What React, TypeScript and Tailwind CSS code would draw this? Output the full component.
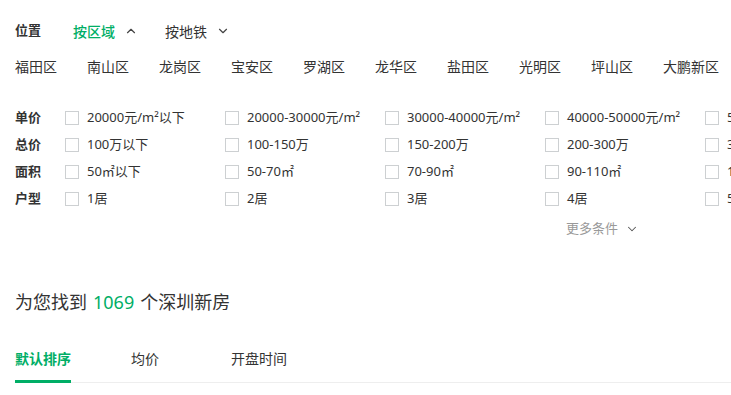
import { ChevronDown, ChevronUp } from "lucide-react";

const districts = [
  "福田区",
  "南山区",
  "龙岗区",
  "宝安区",
  "罗湖区",
  "龙华区",
  "盐田区",
  "光明区",
  "坪山区",
  "大鹏新区",
];

const filters = [
  {
    label: "单价",
    options: [
      "20000元/m²以下",
      "20000-30000元/m²",
      "30000-40000元/m²",
      "40000-50000元/m²",
      "50000-60000元/m²",
    ],
  },
  { label: "总价", options: ["100万以下", "100-150万", "150-200万", "200-300万", "300-400万"] },
  { label: "面积", options: ["50㎡以下", "50-70㎡", "70-90㎡", "90-110㎡", "110-130㎡"] },
  { label: "户型", options: ["1居", "2居", "3居", "4居", "5居"] },
];

export default function App() {
  return (
    <div
      className="h-[395px] w-[731px] overflow-hidden bg-white pl-[15px] pt-[21px] text-[#333]"
      style={{ fontFamily: '"Noto Sans", "Noto Sans CJK SC", sans-serif' }}
    >
      <div className="flex h-5 items-center whitespace-nowrap">
        <span className="text-[13px] font-bold">位置</span>
        <span className="ml-[32px] text-[14px] font-medium text-[#00ae66]">按区域</span>
        <ChevronUp size={14} strokeWidth={2} className="ml-[9px] text-[#444]" />
        <span className="ml-[27px] text-[14px]">按地铁</span>
        <ChevronDown size={14} strokeWidth={2} className="ml-[9px] text-[#444]" />
      </div>

      <div className="mt-[15px] flex h-5 items-center whitespace-nowrap text-[14px]">
        {districts.map((d) => (
          <span key={d} className="w-[72px] shrink-0">
            {d}
          </span>
        ))}
      </div>

      <div className="mt-[28px] whitespace-nowrap">
        {filters.map((row) => (
          <div key={row.label} className="flex h-[27px] items-center">
            <span className="w-[50px] shrink-0 text-[13px] font-bold">{row.label}</span>
            {row.options.map((opt) => (
              <div key={opt} className="flex w-[160px] shrink-0 items-center">
                <span className="h-[14px] w-[14px] shrink-0 border border-[#cdd0d2] bg-white"></span>
                <span className="ml-[8px] text-[13px]">{opt}</span>
              </div>
            ))}
          </div>
        ))}
      </div>

      <div className="ml-[551px] mt-[7px] flex h-5 items-center whitespace-nowrap text-[13px] text-[#999]">
        更多条件
        <ChevronDown size={14} strokeWidth={1.75} className="ml-[7px] text-[#555]" />
      </div>

      <div className="mt-[51px] flex h-6 items-center whitespace-nowrap text-[18px]">
        为您找到<span className="mx-[6px] text-[#00ae66]">1069</span>个深圳新房
      </div>

      <div className="mt-[35px] flex items-end border-b border-[#eee] text-[14px] whitespace-nowrap">
        <div className="-mb-px border-b-[3px] border-[#00ae66] pb-[11px] font-bold leading-5 text-[#00ae66]">
          默认排序
        </div>
        <div className="ml-[60px] pb-[13px] leading-5">均价</div>
        <div className="ml-[72px] pb-[13px] leading-5">开盘时间</div>
      </div>
    </div>
  );
}
